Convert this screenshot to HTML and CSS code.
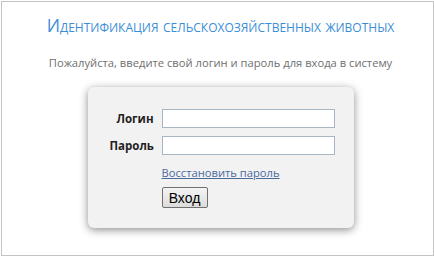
FILE: index.html
```html
<!DOCTYPE html>
<html lang="ru">
<head>
    <meta charset="UTF-8">
    <meta name="viewport" content="width=device-width, initial-scale=1.0">
    <title>Вход в систему</title>
    <link rel="stylesheet" href="styles.css">
</head>
<body>

    <div class="page">
        <h1 class="title">Идентификация сельскохозяйственных животных</h1>
        <p class="hint">Пожалуйста, введите свой логин и пароль для входа в систему</p>

        <!-- Login form -->
        <form class="login-box">
            <label class="login-label" for="login">Логин</label>
            <input class="login-input" type="text" id="login">

            <label class="login-label" for="password">Пароль</label>
            <input class="login-input" type="password" id="password">

            <a class="restore-link" href="#">Восстановить пароль</a>
            <div class="actions">
                <button class="login-btn" type="button">Вход</button>
            </div>
        </form>
    </div>

</body>
</html>
```

FILE: styles.css
```css
body {
    margin: 0;
    font-family: "Open Sans", "Noto Sans", sans-serif;
    background-color: #ffffff;
}

.page {
    box-sizing: border-box;
    width: 433px;
    height: 255px;
    margin: 1px 0 0 1px;
    padding: 0 0 0 6px;
    border: 1px solid #c3c3c3;
    display: flex;
    flex-direction: column;
    align-items: center;
}

.title {
    margin: 11px 0 0;
    font-size: 17.4px;
    font-weight: normal;
    font-variant: small-caps;
    color: #3b8ed6;
    line-height: 24px;
    white-space: nowrap;
}

.hint {
    margin: 18px 0 0;
    font-size: 11.2px;
    color: #6f6f6f;
    line-height: 15px;
    white-space: nowrap;
}

.login-box {
    box-sizing: border-box;
    width: 266px;
    height: 141px;
    margin-top: 17px;
    padding: 22px 19px 20px 22px;
    background-color: #f2f2f2;
    border-radius: 6px;
    box-shadow: 0 2px 8px rgba(0, 0, 0, 0.45);
    display: grid;
    grid-template-columns: 44px 173px;
    grid-template-rows: 19px 19px 16px 21px;
    column-gap: 8px;
    row-gap: 8px;
    align-items: center;
}

.login-label {
    text-align: right;
    white-space: nowrap;
    font-size: 11.5px;
    font-weight: bold;
    color: #222222;
}

.login-input {
    box-sizing: border-box;
    height: 19px;
    width: 173px;
    margin: 0;
    border: 1px solid #a6b6c3;
    background-color: #ffffff;
    padding: 0 3px;
}

.restore-link {
    grid-column: 2;
    margin-top: 4px;
    font-size: 11.2px;
    color: #4a6a9e;
    line-height: 16px;
    white-space: nowrap;
}

.actions {
    grid-column: 2;
    display: flex;
}

.login-btn {
    box-sizing: border-box;
    width: 46px;
    height: 21px;
    padding: 0;
    font-family: "Liberation Sans", Arial, sans-serif;
    font-size: 14px;
    color: #000000;
    border: 1px solid #707070;
    border-radius: 2px;
    background: linear-gradient(#f4f4f4, #dcdcdc);
}
```
